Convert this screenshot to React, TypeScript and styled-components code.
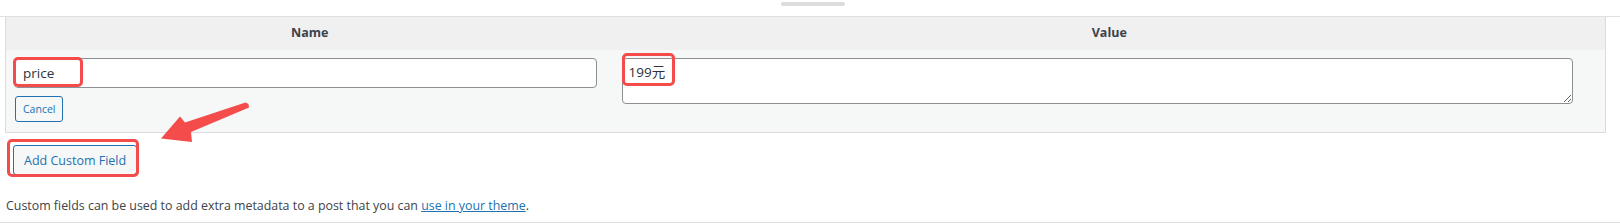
import styled, { createGlobalStyle } from 'styled-components'

const GlobalStyle = createGlobalStyle`
  html, body {
    margin: 0;
    padding: 0;
    background: #fff;
  }

  body {
    font-family: "Open Sans", "Noto Sans", "Noto Sans CJK SC", sans-serif;
    font-size: 12px;
    color: #3c434a;
  }
`

const Page = styled.div`
  position: relative;
  width: 1620px;
  height: 224px;
  overflow: hidden;
`

const TopBar = styled.div`
  height: 16px;
  border-bottom: 1px solid #e0e0e0;
  display: flex;
  justify-content: center;
  padding-left: 5px;
  box-sizing: content-box;
`

const Handle = styled.div`
  width: 64px;
  height: 4px;
  margin-top: 2px;
  border-radius: 2px;
  background: #dcdcde;
`

const Box = styled.div`
  padding: 0 14px 0 5px;
  border-bottom: 1px solid #e0e0e0;
  height: 205px;
`

const Table = styled.table`
  width: 100%;
  border-collapse: collapse;
  border: 1px solid #dcdcde;
  border-top: none;
  table-layout: fixed;
`

const HeadCell = styled.th<{ $left?: boolean }>`
  width: ${(props) => (props.$left ? '38%' : 'auto')};
  height: 33px;
  padding: 0 8px 2px;
  box-sizing: border-box;
  background: #f0f0f1;
  font-weight: 700;
  font-size: 12.5px;
  color: #3c434a;
  text-align: center;
`

const BodyCell = styled.td`
  background: #f6f7f7;
  vertical-align: top;
  padding: 0;
`

const NameInput = styled.input`
  display: block;
  width: 96%;
  height: 30px;
  margin: 8px 8px 8px 8px;
  box-sizing: border-box;
  padding: 0 8px;
  border: 1px solid #8c8f94;
  border-radius: 4px;
  background: #fff;
  font: inherit;
  font-size: 13.5px;
  color: #2c3338;
  outline: none;
`

const ValueArea = styled.textarea`
  display: block;
  width: 96%;
  height: 46px;
  margin: 8px;
  box-sizing: border-box;
  padding: 4px 6px;
  border: 1px solid #8c8f94;
  border-radius: 4px;
  background: #fff;
  font: inherit;
  font-size: 13.5px;
  line-height: 18px;
  color: #2c3338;
  resize: vertical;
  outline: none;
`

const CellFooter = styled.div`
  padding: 0 8px 10px 9px;
`

const Button = styled.button<{ $small?: boolean }>`
  display: inline-flex;
  align-items: center;
  box-sizing: border-box;
  height: ${(props) => (props.$small ? '26px' : '30px')};
  padding: ${(props) => (props.$small ? '0 7px' : '0 10px')};
  border: 1px solid #2271b1;
  border-radius: 3px;
  background: #f6f7f7;
  color: #2271b1;
  font: inherit;
  font-size: ${(props) => (props.$small ? '10.5px' : '12.5px')};
  cursor: pointer;
`

const AddRow = styled.div`
  padding: 12px 0 0 8px;
`

const Note = styled.p`
  margin: 21px 0 0 1px;
  font-size: 12.4px;
  line-height: 19px;
  color: #3c434a;

  a {
    color: #2271b1;
    text-decoration: underline;
  }
`

const Highlight = styled.div`
  position: absolute;
  box-sizing: border-box;
  border: 3px solid #f44b4b;
  border-radius: 5px;
  pointer-events: none;
`

const Arrow = styled.svg`
  position: absolute;
  left: 0;
  top: 0;
  pointer-events: none;
`

const marks = [
  { left: 13, top: 57, width: 70, height: 30 },
  { left: 622, top: 53, width: 53, height: 33 },
  { left: 7, top: 139, width: 132, height: 38 },
]

export default function App() {
  return (
    <>
      <GlobalStyle />
      <Page>
        <TopBar>
          <Handle />
        </TopBar>
        <Box>
          <Table>
            <thead>
              <tr>
                <HeadCell $left>Name</HeadCell>
                <HeadCell>Value</HeadCell>
              </tr>
            </thead>
            <tbody>
              <tr>
                <BodyCell>
                  <NameInput defaultValue="price" />
                  <CellFooter>
                    <Button $small>Cancel</Button>
                  </CellFooter>
                </BodyCell>
                <BodyCell>
                  <ValueArea defaultValue="199元" />
                </BodyCell>
              </tr>
            </tbody>
          </Table>
          <AddRow>
            <Button>Add Custom Field</Button>
          </AddRow>
          <Note>
            Custom fields can be used to add extra metadata to a post that you can{' '}
            <a href="#">use in your theme</a>.
          </Note>
        </Box>
        {marks.map((m, i) => (
          <Highlight key={i} style={{ left: m.left, top: m.top, width: m.width, height: m.height }} />
        ))}
        <Arrow width="300" height="200" viewBox="0 0 300 200">
          <polygon
            points="161,138.5 180,116.5 185,122.5 245.5,102.5 248.5,104 249,107.5 191,132 192,142"
            fill="#f44b4b"
            strokeLinejoin="round"
          />
        </Arrow>
      </Page>
    </>
  )
}
